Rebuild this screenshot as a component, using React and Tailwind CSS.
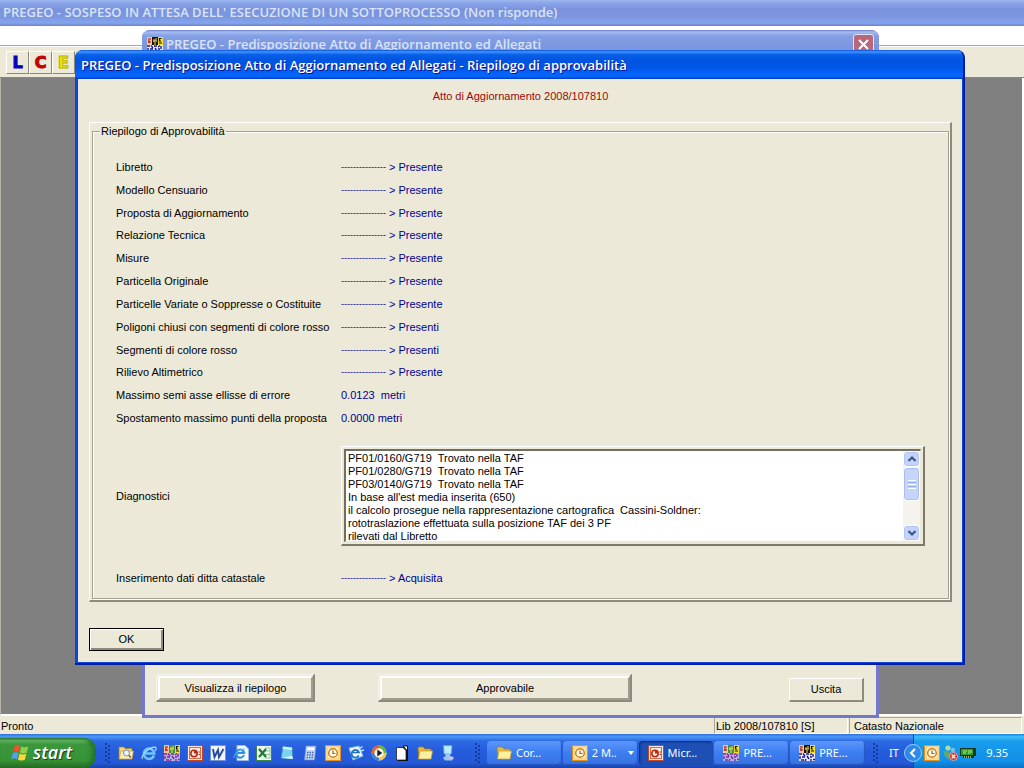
import React from "react";

const summary = [
  ["Libretto", "Presente"],
  ["Modello Censuario", "Presente"],
  ["Proposta di Aggiornamento", "Presente"],
  ["Relazione Tecnica", "Presente"],
  ["Misure", "Presente"],
  ["Particella Originale", "Presente"],
  ["Particelle Variate o Soppresse o Costituite", "Presente"],
  ["Poligoni chiusi con segmenti di colore rosso", "Presenti"],
  ["Segmenti di colore rosso", "Presenti"],
  ["Rilievo Altimetrico", "Presente"],
];

const diagnostics = `PF01/0160/G719  Trovato nella TAF
PF01/0280/G719  Trovato nella TAF
PF03/0140/G719  Trovato nella TAF
In base all'est media inserita (650)
il calcolo prosegue nella rappresentazione cartografica  Cassini-Soldner:
rototraslazione effettuata sulla posizione TAF dei 3 PF
rilevati dal Libretto`;

function Svg({ children, label }) {
  return (
    <svg viewBox="0 0 16 16" className="h-4 w-4 shrink-0" role="img" aria-label={label}>
      {children}
    </svg>
  );
}

function FolderIcon() {
  return (
    <Svg label="Cartella">
      <path d="M1 3 L2 2 H6 L8 4 H14 V14 H2 Z" fill="#e8b93c" stroke="#a97b13" strokeWidth=".7" />
      <path d="M1.500 14 L3 6 H15.500 L14 14 Z" fill="#fff0a0" stroke="#c69a2b" strokeWidth=".7" />
    </Svg>
  );
}

function FolderSearchIcon() {
  return (
    <Svg label="Esplora">
      <path d="M1 2 H6 L7 3.500 H14 V14 H1 Z" fill="#f6d877" stroke="#a97b13" strokeWidth=".7" />
      <path d="M1 14 L3 6 H15.500 L14 14 Z" fill="#ffeeb0" stroke="#c69a2b" strokeWidth=".7" />
      <circle cx="8.500" cy="8" r="3" fill="#e4f3ff" stroke="#7e8ea6" />
      <path d="M10.700 10.200 L13 12.500" stroke="#5d6677" strokeWidth="1.500" />
    </Svg>
  );
}

function ExplorerIcon() {
  return (
    <Svg label="Internet Explorer">
      <path d="M13 10.500 A5.200 5.200 0 1 1 13.300 8.500 H4.500" fill="none" stroke="#6fc4ff" strokeWidth="2.600" />
      <path d="M1.500 14 C-0.500 11 8 2 14 2.200 C16 2.500 15 5 14 6" fill="none" stroke="#a8e0ff" strokeWidth="1.200" />
    </Svg>
  );
}

function PregeoIcon({ pale }) {
  return (
    <Svg label="Pregeo">
      <rect width="16" height="16" fill={pale ? "#aeb7e8" : "#e9ecff"} />
      <rect width="5" height="8" fill="#f3c79a" />
      <rect x="5" width="6" height="8" fill={pale ? "#3f8f4a" : "#15130f"} />
      <rect x="11" width="5" height="8" fill="#f4dc2a" />
      <path d="M2 1 V6 M1 5 H4 M3 2 H4" stroke="#b01717" strokeWidth="1.200" />
      <path d="M7 2 V5 M9 1 V4 M6 4 H10 M8 5 V8" stroke="#f7e25a" strokeWidth="1" />
      <path d="M14.500 1.500 H12.500 V4 H14 M12 6 H15" stroke="#111" strokeWidth="1.200" fill="none" />
      <path d="M0 9 H3 M4 8.500 L6 11 M7 9 H10 M11 10 L13 8.500 M14 9 V12 M1 11 V14 M3 12 H6 M8 11 L10 14 M11 12 H13 M2 15 H5 M7 14 L6 16 M12 14 V16 M14 14.500 H16" stroke={pale ? "#8b2496" : "#1d1a86"} strokeWidth="1.400" />
    </Svg>
  );
}

function PowerPointIcon() {
  return (
    <Svg label="PowerPoint">
      <rect x=".5" y=".5" width="15" height="15" fill="#fbe7dc" stroke="#c4492b" />
      <rect x="2.500" y="2.500" width="11" height="11" fill="none" stroke="#d9694a" />
      <circle cx="7" cy="8.500" r="3.200" fill="none" stroke="#b22a12" strokeWidth="1.500" />
      <path d="M7 8.500 V5 A3.500 3.500 0 0 1 10.500 8.500 Z" fill="#b22a12" />
      <path d="M11.500 7 H13 M11.500 9.500 H13" stroke="#b22a12" />
    </Svg>
  );
}

function WordIcon() {
  return (
    <Svg label="Word">
      <rect x=".5" y=".5" width="15" height="15" fill="#f1f5ff" stroke="#7590cf" />
      <path d="M3 4 L4.500 12 L8 5 L9 12 L13.500 4" fill="none" stroke="#274a9c" strokeWidth="1.900" />
    </Svg>
  );
}

function PageExplorerIcon() {
  return (
    <Svg label="Pagina web">
      <path d="M4 .5 H12 L15.500 4 V15.500 H4 Z" fill="#f4faff" stroke="#9ab9e6" />
      <path d="M11 10 A4 4 0 1 1 11.200 8 H4" fill="none" stroke="#2a8fe0" strokeWidth="2" />
      <path d="M1 13 C0 10 7 3 12 4" fill="none" stroke="#62c0f5" />
    </Svg>
  );
}

function ExcelIcon() {
  return (
    <Svg label="Excel">
      <rect x=".5" y=".5" width="15" height="15" fill="#eef8ee" stroke="#3b8a49" />
      <path d="M9 3 H14 V13 H9 M9 6 H14 M9 9.500 H14" fill="none" stroke="#8dc598" />
      <path d="M3 4 L10 12 M10 4 L3 12" stroke="#1f7a34" strokeWidth="2.300" />
    </Svg>
  );
}

function NotesIcon() {
  return (
    <Svg label="Blocco note">
      <path d="M4 1.500 L13 2.500 L14 14 L2 13 Z" fill="#7cd3f0" stroke="#2f7fb5" strokeWidth=".7" />
      <path d="M4 1.500 L13 2.500 L13.200 5 L3.600 4 Z" fill="#c9f1fc" />
      <path d="M2 13 L14 14 L13 11 Z" fill="#e8fbff" />
    </Svg>
  );
}

function CalculatorIcon() {
  return (
    <Svg label="Calcolatrice">
      <path d="M4 1 H14 L12.500 15 H2.500 Z" fill="#c4d7f5" stroke="#6a8bc4" strokeWidth=".7" />
      <path d="M5.500 2.500 H12 V5 H5.200 Z" fill="#fff" />
      <path d="M5 7.500 H12 M4.800 10 H12 M4.500 12.500 H11.500" stroke="#4566a8" strokeWidth="1.400" strokeDasharray="1.500 1" />
    </Svg>
  );
}

function ClockIcon() {
  return (
    <Svg label="Outlook">
      <rect x=".5" y=".5" width="15" height="15" fill="#fff2cf" stroke="#e0901c" />
      <rect x="2" y="2" width="12" height="12" fill="none" stroke="#f4bd5c" />
      <circle cx="8" cy="8" r="4.300" fill="#fffdf2" stroke="#cf7f12" strokeWidth="1.500" />
      <path d="M8 5.500 V8.500 H10.300" fill="none" stroke="#a65e08" strokeWidth="1.200" />
    </Svg>
  );
}

function OutlookExpressIcon() {
  return (
    <Svg label="Posta">
      <path d="M1 3 L11 1 L15 11 L5 15 Z" fill="#edf8ff" stroke="#75b6e8" />
      <path d="M10.800 10.500 A3.800 3.800 0 1 1 11 7.500 H4.500" fill="none" stroke="#2171bd" strokeWidth="1.700" />
      <path d="M10 4.500 L14.500 1.500 M12 6 L16 5" fill="none" stroke="#bfe6ff" strokeWidth="1.500" />
    </Svg>
  );
}

function MediaIcon() {
  return (
    <Svg label="Media Player">
      <circle cx="8" cy="8" r="7.500" fill="#e9edf5" />
      <path d="M8 8 V.5 A7.500 7.500 0 0 0 .5 8 Z" fill="#e3602a" />
      <path d="M8 8 H15.500 A7.500 7.500 0 0 0 8 .5 Z" fill="#5fb446" />
      <path d="M8 8 H.5 A7.500 7.500 0 0 0 8 15.500 Z" fill="#3d7edb" />
      <path d="M8 8 V15.500 A7.500 7.500 0 0 0 15.500 8 Z" fill="#f5c838" />
      <circle cx="8" cy="8" r="4.700" fill="#fff6df" />
      <path d="M6.300 4.500 L11.300 8 L6.300 11.500 Z" fill="#16202f" />
    </Svg>
  );
}

function PaperIcon() {
  return (
    <Svg label="Documento">
      <path d="M4 2 H10 L14 6 V16 H4 Z" fill="#111" />
      <path d="M2.500 2.500 H9 L12 5.500 V15 H2.500 Z" fill="#fff" stroke="#111" strokeWidth=".7" />
      <path d="M9 1 L13.500 1 V6 Z" fill="#fff" stroke="#111" />
    </Svg>
  );
}

function DesktopIcon() {
  return (
    <Svg label="Computer">
      <path d="M3.500 .5 H12 L11.500 9 H4 Z" fill="#b9e9ff" stroke="#5a94da" strokeWidth=".8" />
      <path d="M5.500 9 H10 V12 H5.500 Z" fill="#9fc4f2" />
      <path d="M3 13 C5 10 12 10 14 13 L12 15.500 H5 Z" fill="#9cc4f5" />
      <path d="M9 13 H13" stroke="#e9bcc5" strokeWidth="1.500" />
    </Svg>
  );
}

function PeopleIcon() {
  return (
    <Svg label="Messenger">
      <circle cx="6" cy="3" r="2.600" fill="#a6e0a2" />
      <circle cx="11" cy="5" r="2.200" fill="#7dbde9" />
      <path d="M1 6 L6 6 L9 10 L7 14 L3 12 Z" fill="#5ba873" />
      <path d="M8 7 H13 L14 12 H8 Z" fill="#4c8fc9" />
      <circle cx="11.500" cy="11.500" r="4" fill="#df2f23" stroke="#ffd9d5" strokeWidth=".6" />
      <path d="M9.800 9.800 L13.200 13.200 M13.200 9.800 L9.800 13.200" stroke="#fff" strokeWidth="1.300" />
    </Svg>
  );
}

function CardIcon() {
  return (
    <Svg label="Scheda video">
      <path d="M0 3 H16 V11 H14 V13 H3 V11 H0 Z" fill="#16391b" />
      <rect x="1" y="4" width="12" height="6" fill="#2c9b35" />
      <path d="M3 6 H7 M9 5 V9 M3 8 H6 M11 5 V8" stroke="#b6ee68" />
      <path d="M4 12 H12" stroke="#e8d23f" strokeWidth="1.500" strokeDasharray="1 1" />
    </Svg>
  );
}

function FlagIcon() {
  return (
    <svg viewBox="0 0 18 18" className="h-[18px] w-[18px]" aria-hidden="true">
      <path d="M3.800 1.500 Q6.500 0 9.300 1.800 L7.800 8 Q5 6.200 2.200 8 Z" fill="#f0542c" />
      <path d="M10.300 2.300 Q13.500 4 17.300 2.500 L15.700 8.700 Q12 10.200 8.800 8.500 Z" fill="#8ed04a" />
      <path d="M1.900 9 Q4.500 7.300 7.600 9 L6 15.300 Q3.200 13.400 .2 15.200 Z" fill="#5a9bf4" />
      <path d="M8.600 9.500 Q12 11.200 15.400 9.700 L13.800 15.800 Q10.300 17.300 7 15.700 Z" fill="#fbd83c" />
    </svg>
  );
}

function Grip() {
  return (
    <svg viewBox="0 0 6 22" className="h-[22px] w-[6px] shrink-0" aria-hidden="true">
      {[1, 5, 9, 13, 17].map((y) => (
        <g key={y}>
          <rect x="0" y={y} width="2" height="2" fill="#153b9e" />
          <rect x="3" y={y + 2} width="2" height="2" fill="#153b9e" />
        </g>
      ))}
    </svg>
  );
}

function ToolButton({ children, className }) {
  return (
    <button className={"h-[23px] w-[23px] border border-t-white border-r-[#8a8778] border-b-[#8a8778] border-l-white bg-[#ece9d8] text-center font-['DejaVu_Sans',sans-serif] text-[16px] leading-5 font-bold " + className}>
      {children}
    </button>
  );
}

function Arrow({ text }) {
  return (
    <dd className="flex items-center text-[#000094]">
      <span className="w-12 text-[9px]">---------------</span>
      <span className="whitespace-pre">&gt; {text}</span>
    </dd>
  );
}

function ScrollButton({ down }) {
  return (
    <button aria-label={down ? "Scorri in basso" : "Scorri in alto"} className="flex h-4 w-full items-center justify-center rounded-sm border border-white bg-[#c3d3fb] shadow-[inset_0_0_0_1px_#b0c4f5]">
      <svg viewBox="0 0 10 8" className="h-2 w-[10px]" aria-hidden="true">
        <path d={down ? "M1.500 2 L5 5.500 L8.500 2" : "M1.500 6 L5 2.500 L8.500 6"} fill="none" stroke="#3f5688" strokeWidth="2.200" />
      </svg>
    </button>
  );
}

function Framed({ children, className }) {
  return (
    <div className={"border-t border-r-2 border-b-2 border-l border-t-[#f6f4ea] border-r-[#8e8b7c] border-b-[#8e8b7c] border-l-[#f6f4ea] pt-px pl-px " + className}>
      <button className="block h-6 w-full border-t-2 border-r-2 border-b-2 border-l-2 border-t-white border-r-[#a09d8e] border-b-[#a09d8e] border-l-white">{children}</button>
    </div>
  );
}

function TaskButton({ icon, text, active, arrow }) {
  return (
    <button className={"flex h-6 min-w-0 flex-1 items-center gap-1 rounded-sm pl-[9px] text-[11px] text-white " + (active ? "bg-[#1e4fb5] shadow-[inset_1px_1px_2px_#0b2c7c]" : "bg-linear-to-b from-[#5b96fa] via-[#3c7df0] to-[#3872e4] shadow-[inset_-1px_-1px_1px_#2455bd]")}>
      {icon}
      <span className="flex-1 truncate text-left">{text}</span>
      {arrow && (
        <svg viewBox="0 0 6 4" className="mr-1 h-1 w-[6px]" aria-hidden="true">
          <path d="M0 0 H6 L3 4 Z" fill="#fff" />
        </svg>
      )}
    </button>
  );
}

function Dialog() {
  return (
    <section className="absolute top-[50px] right-[59px] left-[75px] flex flex-col overflow-hidden rounded-t-lg border-r-2 border-b-2 border-[#001c9c] bg-[#0b46dc]">
      <header className="flex h-[29px] items-center bg-[linear-gradient(180deg,#0a50d8_0%,#3d95ff_6%,#0a5fe8_16%,#0054e0_35%,#0055e5_60%,#0566ff_85%,#0462f8_92%,#003bc0_100%)] pt-[3px] pl-[6px] font-['Open_Sans','Noto_Sans',sans-serif] text-[13px] font-semibold text-white [text-shadow:1px_1px_#0f1089]">
        <h2 className="truncate">PREGEO - Predisposizione Atto di Aggiornamento ed Allegati - Riepilogo di approvabilità</h2>
      </header>
      <div className="mr-px mb-px ml-[3px] bg-[#ece9d8] pr-[10px] pb-[11px] pl-[11px]">
        <p className="pt-[11px] pb-[19px] text-center leading-[13px] text-[#9a0a0a]">Atto di Aggiornamento 2008/107810</p>
        <div className="border-t border-r-2 border-b-2 border-l border-t-white border-r-[#8e8b7c] border-b-[#8e8b7c] border-l-white pt-[2px] pr-px pb-px pl-[2px]">
          <fieldset className="border border-[#a5a295] px-[23px] pb-2 shadow-[1px_1px_0_#fff,inset_1px_1px_0_#fff]">
            <legend className="-ml-4 bg-[#ece9d8] px-px leading-[13px]">Riepilogo di Approvabilità</legend>
            <dl className="mt-[18px] grid h-[274px] grid-rows-12">
              {summary.map(([name, value]) => (
                <div key={name} className="grid grid-cols-[225px_1fr] items-center leading-[13px]">
                  <dt>{name}</dt>
                  <Arrow text={value} />
                </div>
              ))}
              <div className="grid grid-cols-[225px_1fr] items-center leading-[13px]">
                <dt>Massimo semi asse ellisse di errore</dt>
                <dd className="whitespace-pre text-[#000094]">0.0123  metri</dd>
              </div>
              <div className="grid grid-cols-[225px_1fr] items-center leading-[13px]">
                <dt>Spostamento massimo punti della proposta</dt>
                <dd className="text-[#000094]">0.0000 metri</dd>
              </div>
            </dl>
            <div className="mt-4 grid grid-cols-[225px_1fr] items-center">
              <label htmlFor="diagnostici">Diagnostici</label>
              <div className="border-t border-r-2 border-b-2 border-l border-t-white border-r-[#7d7a6b] border-b-[#7d7a6b] border-l-white p-[2px]">
                <div className="flex border-t-2 border-r border-b border-l-2 border-t-[#716f64] border-r-[#ece9d8] border-b-[#ece9d8] border-l-[#716f64] bg-white">
                  <textarea id="diagnostici" readOnly value={diagnostics} className="block h-[90px] min-w-0 flex-1 resize-none overflow-hidden bg-white pt-px pl-[2px] leading-[13px] outline-none" />
                  <div className="flex w-[17px] flex-col bg-[#f5f3ee]">
                    <ScrollButton />
                    <div className="flex h-[34px] flex-col items-center justify-center gap-px rounded-sm border border-white bg-[#c5d5fc] shadow-[inset_0_0_0_1px_#a9bdf0]">
                      <span className="h-px w-2 bg-white" />
                      <span className="h-px w-2 bg-[#8cb0f8]" />
                      <span className="h-px w-2 bg-white" />
                      <span className="h-px w-2 bg-[#8cb0f8]" />
                      <span className="h-px w-2 bg-white" />
                    </div>
                    <div className="flex-1" />
                    <ScrollButton down />
                  </div>
                </div>
              </div>
            </div>
            <dl className="mt-[21px] grid h-[23px] grid-cols-[225px_1fr] items-center">
              <dt>Inserimento dati ditta catastale</dt>
              <Arrow text="Acquisita" />
            </dl>
          </fieldset>
        </div>
        <button className="mt-[26px] block h-[23px] w-[75px] border border-black shadow-[inset_1px_1px_#fff,inset_-2px_-2px_#8e8b7c]">OK</button>
      </div>
    </section>
  );
}

export default function App() {
  return (
    <div className="relative flex min-h-screen flex-col overflow-hidden bg-[#ece9d8] font-['Liberation_Sans',Arial,sans-serif] text-[11px] text-black">
      <header className="flex h-[26px] items-center bg-[linear-gradient(180deg,#9db9f0_0%,#8aa4e8_12%,#7b93dd_35%,#7c96e0_65%,#83a6ee_88%,#7080c8_100%)] pl-[3px] font-['Open_Sans','Noto_Sans',sans-serif] text-[13px] font-semibold text-[#d8e4f8]">
        <h1 className="truncate">PREGEO - SOSPESO IN ATTESA DELL' ESECUZIONE DI UN SOTTOPROCESSO (Non risponde)</h1>
      </header>
      <div className="h-5 border-b border-[#aca899] bg-white" />
      <div className="flex h-8 items-start border-t border-b border-t-white border-b-[#8a8778] pt-1 pl-[6px]">
        <ToolButton className="text-[#0000d0] [-webkit-text-stroke:1px_#0000b0]">L</ToolButton>
        <ToolButton className="text-[#d80000] [-webkit-text-stroke:1px_#b00000]">C</ToolButton>
        <ToolButton className="text-[#f5ee00] [-webkit-text-stroke:1px_#b5ae00]">E</ToolButton>
      </div>
      <main className="flex-1 border-r-2 border-b-2 border-l border-white border-l-[#b8b5a8] bg-[#808080]" />

      <section className="absolute top-[30px] right-[145px] bottom-[50px] left-[142px] flex flex-col overflow-hidden rounded-t-lg bg-[#7478cc]">
        <header className="flex h-[29px] items-center bg-[linear-gradient(180deg,#6f80c8_0%,#a4bdf2_7%,#859fe5_20%,#7b95df_60%,#829fe8_100%)] pr-[5px] pl-[5px] font-['Open_Sans','Noto_Sans',sans-serif] text-[13px] font-semibold text-[#d8e4f8]">
          <PregeoIcon />
          <h2 className="min-w-0 flex-1 truncate pt-px pl-[3px]">PREGEO - Predisposizione Atto di Aggiornamento ed Allegati</h2>
          <button aria-label="Chiudi" className="flex h-[21px] w-[21px] items-center justify-center rounded-[3px] border border-[#dfe3f8] bg-[#b8687a]">
            <svg viewBox="0 0 13 13" className="h-[13px] w-[13px]" aria-hidden="true">
              <path d="M2 2 L11 11 M11 2 L2 11" stroke="#fff" strokeWidth="2" />
            </svg>
          </button>
        </header>
        <div className="mx-[3px] mb-[3px] flex flex-1 items-end bg-[#ece9d8] pr-3 pb-[13px] pl-[11px]">
          <Framed className="w-[159px]">Visualizza il riepilogo</Framed>
          <Framed className="ml-[63px] w-[254px]">Approvabile</Framed>
          <button className="ml-auto h-6 w-[75px] border-t border-r-2 border-b-2 border-l border-t-white border-r-[#8e8b7c] border-b-[#8e8b7c] border-l-white">Uscita</button>
        </div>
      </section>

      <Dialog />

      <footer className="flex h-[18px] items-center bg-[#ece9d8] pr-[2px] pl-px leading-4">
        <span className="flex-1 pt-px">Pronto</span>
        <span className="h-[17px] w-[134px] border border-t-[#aca899] border-r-white border-b-white border-l-[#aca899] pl-px">Lib 2008/107810 [S]</span>
        <span className="ml-px h-[17px] w-[173px] border border-t-[#aca899] border-r-white border-b-white border-l-[#aca899] pl-1">Catasto Nazionale</span>
      </footer>

      <nav className="flex h-[34px] items-center bg-[linear-gradient(180deg,#2f6fdc_0%,#4b98f6_8%,#2e6ae4_20%,#245cdc_50%,#2459d8_85%,#1b43a8_100%)] pt-1 font-['Noto_Sans',sans-serif] text-white">
        <button className="flex h-[30px] w-24 items-center gap-1 rounded-r-xl bg-[linear-gradient(180deg,#2f7b2f_0%,#63b663_8%,#3c973c_22%,#369336_75%,#256b25_100%)] pl-[11px] font-['Open_Sans',sans-serif] text-[18px] font-semibold italic shadow-[inset_-4px_0_5px_#23712b] [text-shadow:1px_1px_1px_#173b17]">
          <FlagIcon />
          <span className="pb-[2px] leading-5">start</span>
        </button>
        <div className="ml-[9px] flex w-[13px]"><Grip /></div>
        <div className="flex gap-[7px]">
          <FolderSearchIcon />
          <ExplorerIcon />
          <PregeoIcon pale />
          <PowerPointIcon />
          <WordIcon />
          <PageExplorerIcon />
          <ExcelIcon />
          <NotesIcon />
          <CalculatorIcon />
          <ClockIcon />
          <OutlookExpressIcon />
          <MediaIcon />
          <PaperIcon />
          <FolderIcon />
          <DesktopIcon />
        </div>
        <div className="ml-[19px] flex w-3"><Grip /></div>
        <div className="flex min-w-0 flex-1 gap-px">
          <TaskButton icon={<FolderIcon />} text="Cor..." />
          <TaskButton icon={<ClockIcon />} text="2 M.." arrow />
          <TaskButton icon={<PowerPointIcon />} text="Micr..." active />
          <TaskButton icon={<PregeoIcon pale />} text="PRE..." />
          <TaskButton icon={<PregeoIcon />} text="PRE..." />
        </div>
        <div className="ml-2 flex w-4"><Grip /></div>
        <span className="w-[15px] text-[11px]">IT</span>
        <button aria-label="Mostra icone nascoste" className="z-10 -mr-[9px] flex h-[18px] w-[18px] items-center justify-center rounded-full border border-[#8fd0fb] bg-[#2f88e8]">
          <svg viewBox="0 0 8 10" className="h-[10px] w-2" aria-hidden="true">
            <path d="M6 1 L2 5 L6 9" fill="none" stroke="#fff" strokeWidth="2" />
          </svg>
        </button>
        <div className="-mt-1 flex h-[34px] w-[111px] items-center gap-[2px] border-l border-[#0f4fb0] bg-[linear-gradient(180deg,#1580dd_0%,#3fbdf8_8%,#189ceb_22%,#1190e8_80%,#0d72c4_100%)] pt-1 pl-[10px]">
          <ClockIcon />
          <PeopleIcon />
          <CardIcon />
          <time className="flex-1 pr-4 text-right text-[11px]">9.35</time>
        </div>
      </nav>
    </div>
  );
}
